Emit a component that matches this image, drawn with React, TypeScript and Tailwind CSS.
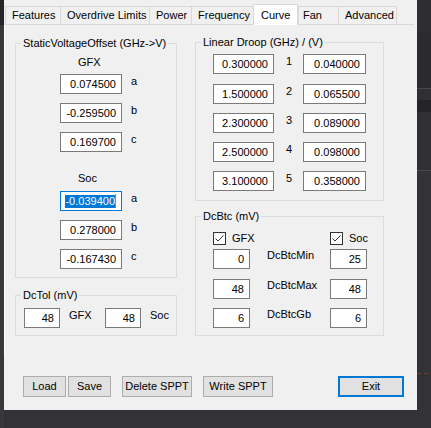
import React from 'react';

const TABS = [
  { label: 'Features', w: 'w-[55px]', pl: 'pl-[6px]' },
  { label: 'Overdrive Limits', w: 'w-[89px]', pl: 'pl-[6px]' },
  { label: 'Power', w: 'w-[42px]', pl: 'pl-[6px]' },
  { label: 'Frequency', w: 'w-[62px]', pl: 'pl-[6px]' },
  { label: 'Curve', w: 'w-[45px]', pl: 'pl-[7px]', active: true },
  { label: 'Fan', w: 'w-[40px]', pl: 'pl-[4px]' },
  { label: 'Advanced', w: 'w-[59px]', pl: 'pl-[6px]', last: true },
];

const DROOP = [
  ['0.300000', '1', '0.040000'],
  ['1.500000', '2', '0.065500'],
  ['2.300000', '3', '0.089000'],
  ['2.500000', '4', '0.098000'],
  ['3.100000', '5', '0.358000'],
];

const DCBTC = [
  ['0', 'DcBtcMin', '25'],
  ['48', 'DcBtcMax', '48'],
  ['6', 'DcBtcGb', '6'],
];

// plain win32-looking edit box
function Box({ value, w, focused }: { value: string; w: string; focused?: boolean }) {
  return (
    <div
      className={`${w} h-[20px] shrink-0 bg-white border flex items-center justify-end pr-[5px] leading-[13px] ${
        focused ? 'border-[#0078d7]' : 'border-[#7a7a7a]'
      }`}
    >
      {focused ? (
        <>
          <span className="bg-[#0078d7] text-white leading-[13px]">{value}</span>
          <span className="w-px h-[14px] bg-[#d27a1c]" />
        </>
      ) : (
        value
      )}
    </div>
  );
}

function Group({ title, w, className, children }: { title: string; w: string; className?: string; children: React.ReactNode }) {
  return (
    <div className={`${w} border border-[#dcdcdc] ${className ?? ''}`}>
      <div className="-mt-[7px] ml-[5px] px-[2px] w-fit bg-[#f0f0f0] leading-[13px]">{title}</div>
      {children}
    </div>
  );
}

function Check({ label }: { label: string }) {
  return (
    <div className="flex items-start">
      <svg width="13" height="13" viewBox="0 0 13 13" className="shrink-0">
        <rect x="0.5" y="0.5" width="12" height="12" fill="#fff" stroke="#333" />
        <path d="M2.5 6.5 L5 9 L10.5 3.5" fill="none" stroke="#333" strokeWidth="1" />
      </svg>
      <span className="ml-[6px] leading-[13px]">{label}</span>
    </div>
  );
}

function Btn({ label, w, ml, primary }: { label: string; w: string; ml: string; primary?: boolean }) {
  return (
    <div
      className={`${w} ${ml} h-[21px] shrink-0 bg-[#e1e1e1] flex items-center justify-center leading-[13px] ${
        primary ? 'border-2 border-[#0078d7]' : 'border border-[#adadad]'
      }`}
    >
      {label}
    </div>
  );
}

export default function App() {
  return (
    <div className="w-[431px] h-[428px] flex overflow-hidden bg-[#323236] text-[11px] text-black font-['Liberation_Sans',Arial,sans-serif]">
      <div className="w-[4px] shrink-0 flex flex-col">
        <div className="h-[25px] bg-[#26262a]" />
        <div className="flex-1 bg-[#38383c]" />
      </div>

      <div className="w-[413px] shrink-0 flex flex-col">
        <div className="h-[410px] bg-[#f0f0f0] flex flex-col">
          {/* tab strip */}
          <div className="h-[24px] pl-[1px] flex items-end">
            {TABS.map((t) =>
              t.active ? (
                <div
                  key={t.label}
                  className={`${t.w} ${t.pl} h-[21px] -mb-px relative z-10 bg-white border-l border-t border-r border-[#d9d9d9] flex items-center leading-[13px]`}
                >
                  {t.label}
                </div>
              ) : (
                <div
                  key={t.label}
                  className={`${t.w} ${t.pl} h-[18px] border-l border-t border-[#d9d9d9] flex items-center leading-[13px] ${
                    t.last ? 'border-r' : ''
                  }`}
                >
                  {t.label}
                </div>
              )
            )}
          </div>

          {/* tab page */}
          <div className="w-[410px] h-[331px] border-t border-t-[#d9d9d9] border-l border-l-white pl-[10px] flex items-start">
            <div className="w-[162px] mt-[18px] flex flex-col">
              <Group title="StaticVoltageOffset (GHz->V)" w="w-[162px]" className="pb-[8px]">
                <div className="ml-[62px] mt-[6px] leading-[13px]">GFX</div>
                {[
                  ['0.074500', 'a'],
                  ['-0.259500', 'b'],
                  ['0.169700', 'c'],
                ].map(([v, l], i) => (
                  <div key={l} className={`flex items-start ml-[44px] ${i === 0 ? 'mt-[5px]' : 'mt-[9px]'}`}>
                    <Box value={v} w="w-[62px]" />
                    <span className="ml-[9px] mt-[1px] leading-[13px]">{l}</span>
                  </div>
                ))}
                <div className="ml-[62px] mt-[20px] leading-[13px]">Soc</div>
                {[
                  ['-0.039400', 'a'],
                  ['0.278000', 'b'],
                  ['-0.167430', 'c'],
                ].map(([v, l], i) => (
                  <div key={l} className={`flex items-start ml-[44px] ${i === 0 ? 'mt-[6px]' : 'mt-[9px]'}`}>
                    <Box value={v} w="w-[62px]" focused={i === 0} />
                    <span className="ml-[9px] mt-[1px] leading-[13px]">{l}</span>
                  </div>
                ))}
              </Group>

              <Group title="DcTol (mV)" w="w-[162px]" className="mt-[17px] pb-[7px]">
                <div className="flex items-start ml-[8px] mt-[6px]">
                  <Box value="48" w="w-[36px]" />
                  <span className="ml-[9px] w-[36px] mt-[1px] leading-[13px]">GFX</span>
                  <Box value="48" w="w-[36px]" />
                  <span className="ml-[9px] mt-[1px] leading-[13px]">Soc</span>
                </div>
              </Group>
            </div>

            <div className="w-[189px] ml-[18px] mt-[17px] flex flex-col">
              <Group title="Linear Droop (GHz) / (V)" w="w-[189px]" className="pb-[9px]">
                {DROOP.map(([a, n, b], i) => (
                  <div
                    key={n}
                    className={`flex items-start ml-[17px] ${i === 0 ? 'mt-[5px]' : i === 1 ? 'mt-[10px]' : 'mt-[9px]'}`}
                  >
                    <Box value={a} w="w-[61px]" />
                    <span className="ml-[12px] w-[17px] mt-[1px] leading-[13px]">{n}</span>
                    <Box value={b} w="w-[63px]" />
                  </div>
                ))}
              </Group>

              <Group title="DcBtc (mV)" w="w-[189px]" className="mt-[15px] pb-[7px]">
                <div className="flex items-start ml-[17px] mt-[9px]">
                  <div className="w-[117px]">
                    <Check label="GFX" />
                  </div>
                  <Check label="Soc" />
                </div>
                {DCBTC.map(([a, l, b], i) => (
                  <div
                    key={l}
                    className={`flex items-start ml-[17px] ${i === 0 ? 'mt-[4px]' : i === 1 ? 'mt-[10px]' : 'mt-[9px]'}`}
                  >
                    <Box value={a} w="w-[37px]" />
                    <span className="ml-[17px] w-[63px] leading-[13px]">{l}</span>
                    <Box value={b} w="w-[37px]" />
                  </div>
                ))}
              </Group>
            </div>
          </div>

          {/* bottom buttons */}
          <div className="flex mt-[21px]">
            <Btn label="Load" w="w-[43px]" ml="ml-[19px]" />
            <Btn label="Save" w="w-[43px]" ml="ml-[2px]" />
            <Btn label="Delete SPPT" w="w-[70px]" ml="ml-[11px]" />
            <Btn label="Write SPPT" w="w-[70px]" ml="ml-[11px]" />
            <Btn label="Exit" w="w-[66px]" ml="ml-[65px]" primary />
          </div>
        </div>
        <div className="flex-1 bg-[#333337]" />
      </div>

      {/* desktop behind the window */}
      <div className="flex-1 flex flex-col">
        <div className="h-[33px] bg-[#2e2e32] flex items-start justify-end">
          <div className="mt-[5px] w-[3px] h-[11px] bg-[#6fa8c8]" />
        </div>
        <div className="h-[55px] bg-[#2b2b2f]" />
        <div className="h-px bg-[#48484c]" />
        <div className="h-[11px] bg-[#303034]" />
        <div className="h-[12px] bg-[#242428]" />
        <div className="h-[58px] bg-[#303034]" />
        <div className="h-px bg-[#4a4a4e]" />
        <div className="h-[202px] bg-[#333337]" />
        <div className="h-px flex gap-[3px] bg-[#333337]">
          <div className="w-[4px] bg-[#7a3a2a]" />
          <div className="w-[4px] bg-[#7a3a2a]" />
          <div className="w-[4px] bg-[#7a3a2a]" />
        </div>
        <div className="flex-1 bg-[#333337]" />
      </div>
    </div>
  );
}
